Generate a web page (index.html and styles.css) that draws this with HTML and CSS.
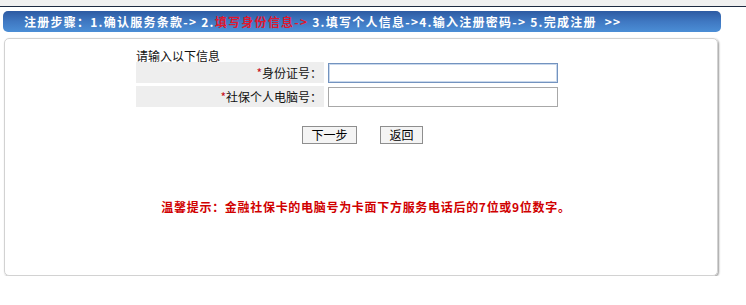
FILE: index.html
```html
<!DOCTYPE html>
<html lang="zh-CN">
<head>
  <meta charset="UTF-8">
  <title>注册 - 填写身份信息</title>
  <link rel="stylesheet" href="styles.css">
</head>
<body>

  <div class="topbar"></div>

  <div class="steps">
    注册步骤：1.确认服务条款-&gt; 2.<span class="current">填写身份信息-&gt;</span> 3.填写个人信息-&gt;4.输入注册密码-&gt; 5.完成注册 &nbsp;&gt;&gt;
  </div>

  <div class="panel">
    <div class="form-wrap">
      <div class="form-title">请输入以下信息</div>
      <div class="form-row">
        <label class="form-label" for="idNo"><span class="req">*</span>身份证号：</label>
        <input class="form-input focus" id="idNo" type="text">
      </div>
      <div class="form-row">
        <label class="form-label" for="pcNo"><span class="req">*</span>社保个人电脑号：</label>
        <input class="form-input" id="pcNo" type="text">
      </div>
    </div>

    <div class="btn-row">
      <button class="btn btn-next">下一步</button>
      <button class="btn btn-back">返回</button>
    </div>

    <div class="hint">温馨提示：金融社保卡的电脑号为卡面下方服务电话后的7位或9位数字。</div>
  </div>

</body>
</html>
```

FILE: styles.css
```css
body {
  margin: 0;
  padding: 0;
  background: #fff;
  font-family: "Noto Sans CJK SC", "DejaVu Sans", sans-serif;
  font-size: 12px;
  color: #000;
}
.topbar {
  height: 6px;
  background: #f0f0f0;
  border-bottom: 1px solid #1d2a40;
}
.steps {
  margin: 4px 0 0 3px;
  width: 697px;
  height: 21px;
  line-height: 21px;
  padding-left: 21px;
  border-radius: 5px;
  background: linear-gradient(#2d5aa2, #3f78c2 50%, #4b8ed6);
  color: #fff;
  font-weight: bold;
  letter-spacing: 1.25px;
  white-space: nowrap;
}
.steps .current {
  color: #e0182e;
}
.panel {
  margin: 6px 0 0 4px;
  width: 712px;
  height: 236px;
  border: 1px solid #d2d2d2;
  border-radius: 5px;
  box-shadow: 1px 1px 2px #9a9a9a;
}
.form-wrap {
  margin-left: 131px;
  padding-top: 11px;
}
.form-title {
  line-height: 12px;
  color: #111;
}
.form-row {
  display: flex;
  align-items: center;
  margin-bottom: 3px;
  height: 21px;
}
.form-label {
  width: 188px;
  height: 100%;
  line-height: 21px;
  padding-right: 2px;
  box-sizing: border-box;
  background: #eeeeee;
  text-align: right;
  color: #111;
}
.req {
  color: #c8101c;
}
.form-input {
  margin-left: 4px;
  width: 230px;
  height: 20px;
  box-sizing: border-box;
  border: 1px solid #a8a8a8;
  padding: 0 2px;
  font-size: 12px;
  outline: none;
}
.form-input.focus {
  border-color: #7393bf;
  box-shadow: inset 0 0 0 1px #c9d8ec;
}
.btn-row {
  display: flex;
  justify-content: center;
  gap: 23px;
  margin-top: 19px;
  padding-left: 3px;
}
.btn {
  height: 18px;
  padding: 0;
  border: 1px solid #8e8e8e;
  background: #f4f4f4;
  font-family: "Noto Sans CJK SC", "DejaVu Sans", sans-serif;
  font-size: 12px;
  line-height: 16px;
  color: #000;
  cursor: pointer;
}
.btn-next {
  width: 55px;
}
.btn-back {
  width: 43px;
}
.hint {
  margin-top: 54px;
  padding-left: 10px;
  text-align: center;
  color: #d00000;
  font-weight: bold;
  letter-spacing: 0.7px;
}
```
